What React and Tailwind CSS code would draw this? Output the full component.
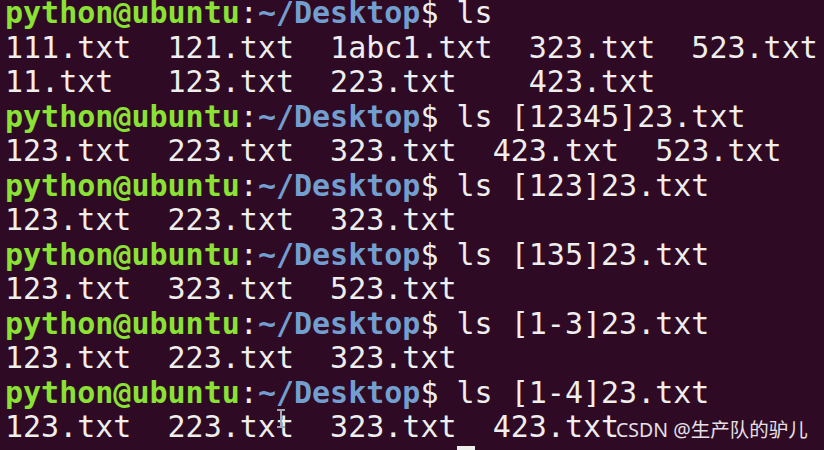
import React from "react";

const lines = [
  { p: true, cmd: " ls" },
  { t: "111.txt  121.txt  1abc1.txt  323.txt  523.txt" },
  { t: "11.txt   123.txt  223.txt    423.txt" },
  { p: true, cmd: " ls [12345]23.txt" },
  { t: "123.txt  223.txt  323.txt  423.txt  523.txt" },
  { p: true, cmd: " ls [123]23.txt" },
  { t: "123.txt  223.txt  323.txt" },
  { p: true, cmd: " ls [135]23.txt" },
  { t: "123.txt  323.txt  523.txt" },
  { p: true, cmd: " ls [1-3]23.txt" },
  { t: "123.txt  223.txt  323.txt" },
  { p: true, cmd: " ls [1-4]23.txt" },
  { t: "123.txt  223.txt  323.txt  423.txt" },
];

export default function App() {
  return (
    <div className="relative w-[824px] h-[450px] overflow-hidden bg-[#2f0a24]">
      <div
        className="flex flex-col pl-[5px] mt-[-4px] text-[30px] leading-[34.5px] whitespace-pre text-[#eeeeec]"
        style={{ fontFamily: '"DejaVu Sans Mono", "Liberation Mono", monospace' }}
      >
        {lines.map((l, i) =>
          l.p ? (
            <div key={i}>
              <span className="font-bold text-[#8ae234]">python@ubuntu</span>
              <span>:</span>
              <span className="font-bold text-[#729fcf]">~/Desktop</span>
              <span>$</span>
              <span>{l.cmd}</span>
            </div>
          ) : (
            <div key={i}>{l.t}</div>
          )
        )}
      </div>
      {/* mouse I-beam */}
      <div className="absolute left-[280px] top-[409px] w-[2px] h-[19px] bg-[#a9a3b8]" />
      <div className="absolute left-[277px] top-[409px] w-[8px] h-[2px] bg-[#a9a3b8]" />
      <div className="absolute left-[277px] top-[426px] w-[8px] h-[2px] bg-[#a9a3b8]" />
      {/* cursor block */}
      <div className="absolute left-[457px] top-[446px] w-[18px] h-[4px] bg-[#eeeeec]" />
      {/* watermark */}
      <div
        className="absolute left-[616px] top-[417px] text-[19.5px] leading-[26px] text-[#e6e0e6] whitespace-nowrap"
        style={{ fontFamily: '"Noto Sans", "Noto Sans CJK SC", sans-serif' }}
      >
        CSDN @生产队的驴儿
      </div>
    </div>
  );
}
